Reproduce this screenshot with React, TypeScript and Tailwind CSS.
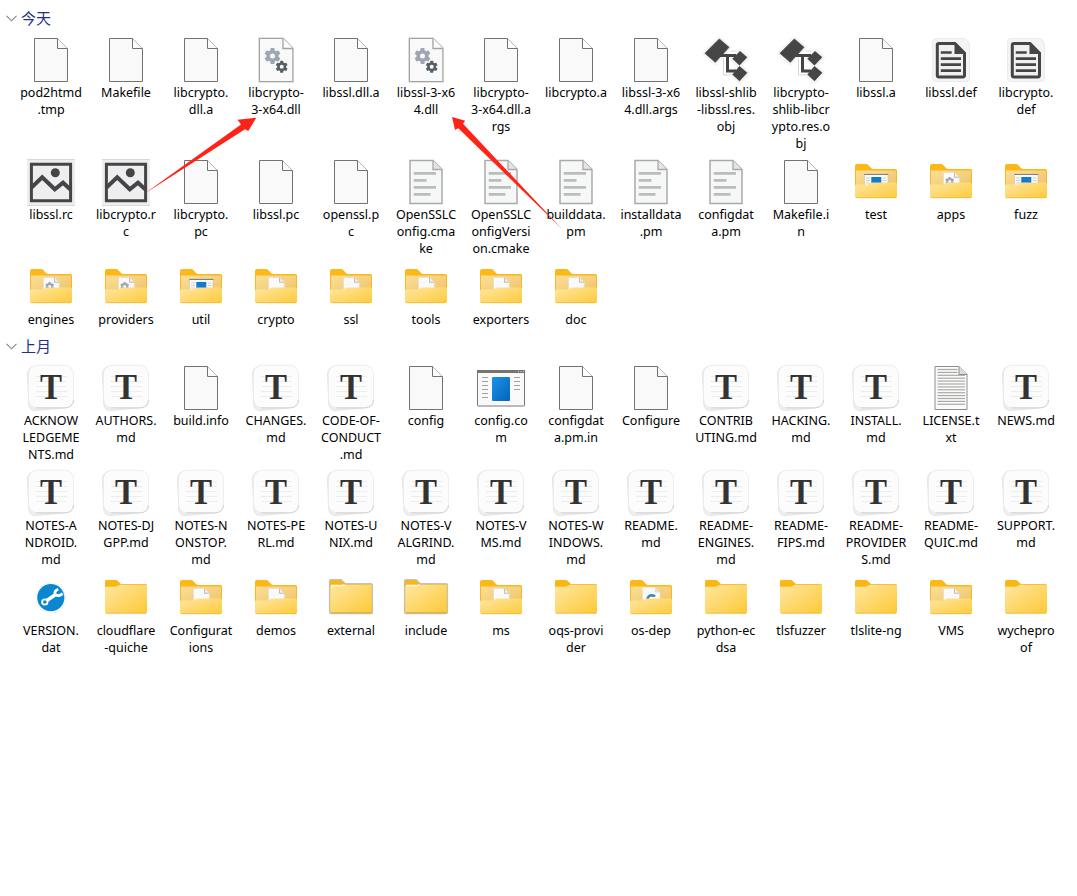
import React from "react";

type Kind =
  | "file" | "dll" | "obj" | "def" | "image" | "script" | "markdown" | "window" | "text" | "data"
  | "folder" | "folderEdge" | "folderPage" | "folderGear" | "folderWindow" | "folderC";

type Item = [Kind, ...string[]];

const today: Item[][] = [
  [
    ["file", "pod2htmd", ".tmp"], ["file", "Makefile"], ["file", "libcrypto.", "dll.a"],
    ["dll", "libcrypto-", "3-x64.dll"], ["file", "libssl.dll.a"], ["dll", "libssl-3-x6", "4.dll"],
    ["file", "libcrypto-", "3-x64.dll.a", "rgs"], ["file", "libcrypto.a"], ["file", "libssl-3-x6", "4.dll.args"],
    ["obj", "libssl-shlib", "-libssl.res.", "obj"], ["obj", "libcrypto-", "shlib-libcr", "ypto.res.o", "bj"],
    ["file", "libssl.a"], ["def", "libssl.def"], ["def", "libcrypto.", "def"],
  ],
  [
    ["image", "libssl.rc"], ["image", "libcrypto.r", "c"], ["file", "libcrypto.", "pc"], ["file", "libssl.pc"],
    ["file", "openssl.p", "c"], ["script", "OpenSSLC", "onfig.cma", "ke"], ["script", "OpenSSLC", "onfigVersi", "on.cmake"],
    ["script", "builddata.", "pm"], ["script", "installdata", ".pm"], ["script", "configdat", "a.pm"],
    ["file", "Makefile.i", "n"], ["folderWindow", "test"], ["folderGear", "apps"], ["folderWindow", "fuzz"],
  ],
  [
    ["folderGear", "engines"], ["folderGear", "providers"], ["folderWindow", "util"], ["folderPage", "crypto"],
    ["folderPage", "ssl"], ["folderPage", "tools"], ["folderPage", "exporters"], ["folderPage", "doc"],
  ],
];

const lastMonth: Item[][] = [
  [
    ["markdown", "ACKNOW", "LEDGEME", "NTS.md"], ["markdown", "AUTHORS.", "md"], ["file", "build.info"],
    ["markdown", "CHANGES.", "md"], ["markdown", "CODE-OF-", "CONDUCT", ".md"], ["file", "config"],
    ["window", "config.co", "m"], ["file", "configdat", "a.pm.in"], ["file", "Configure"],
    ["markdown", "CONTRIB", "UTING.md"], ["markdown", "HACKING.", "md"], ["markdown", "INSTALL.", "md"],
    ["text", "LICENSE.t", "xt"], ["markdown", "NEWS.md"],
  ],
  [
    ["markdown", "NOTES-A", "NDROID.", "md"], ["markdown", "NOTES-DJ", "GPP.md"], ["markdown", "NOTES-N", "ONSTOP.", "md"],
    ["markdown", "NOTES-PE", "RL.md"], ["markdown", "NOTES-U", "NIX.md"], ["markdown", "NOTES-V", "ALGRIND.", "md"],
    ["markdown", "NOTES-V", "MS.md"], ["markdown", "NOTES-W", "INDOWS.", "md"], ["markdown", "README.", "md"],
    ["markdown", "README-", "ENGINES.", "md"], ["markdown", "README-", "FIPS.md"], ["markdown", "README-", "PROVIDER", "S.md"],
    ["markdown", "README-", "QUIC.md"], ["markdown", "SUPPORT.", "md"],
  ],
  [
    ["data", "VERSION.", "dat"], ["folder", "cloudflare", "-quiche"], ["folderPage", "Configurat", "ions"],
    ["folderPage", "demos"], ["folderEdge", "external"], ["folderEdge", "include"], ["folderPage", "ms"],
    ["folder", "oqs-provi", "der"], ["folderC", "os-dep"], ["folder", "python-ec", "dsa"], ["folder", "tlsfuzzer"],
    ["folder", "tlslite-ng"], ["folderPage", "VMS"], ["folder", "wychepro", "of"],
  ],
];

function Gear({ cx, cy, r, hole, fill }: { cx: number; cy: number; r: number; hole: number; fill: string }) {
  const teeth = [0, 60, 120, 180, 240, 300];
  const mid = (r * 0.76 + hole) / 2;
  return (
    <g transform={`translate(${cx} ${cy})`}>
      {teeth.map((a) => (
        <rect key={a} x={-r * 0.26} y={-r} width={r * 0.52} height={r * 0.5} rx={r * 0.1} fill={fill} transform={`rotate(${a})`} />
      ))}
      <circle r={mid} fill="none" stroke={fill} strokeWidth={r * 0.76 - hole} />
    </g>
  );
}

function OpenFolder({ children }: { children: React.ReactNode }) {
  return (
    <>
      <path d="M3 8Q3 6 5 6H14Q15.5 6 16.5 7.2L19 10Q20 11 21.500 11H43.500Q45 11 45 12.500V30H3Z" fill="#fbb816" />
      <path d="M4 12.500H44V30H4Z" fill="url(#inner)" />
      {children}
      <path d="M3 27.500Q3 26.500 4.500 26.500H15.500L20 24.500H43.500Q45 24.500 45 26V38.500Q45 40 43.500 40H4.500Q3 40 3 38.500Z" fill="url(#front)" />
      <path d="M4 39.700H44" stroke="#eeb83a" strokeWidth="0.8" />
    </>
  );
}

function BlankPage() {
  return (
    <>
      <path d="M7.500 2.500H30.500L40.500 12.500V45.500H7.500Z" fill="#f9f9f9" stroke="#72726e" />
      <path d="M30.500 2.500V12.500H40.500" fill="#fcfcfc" stroke="#72726e" />
    </>
  );
}

function MiniPage() {
  return (
    <>
      <path d="M16.500 14.500H27.500L32.300 19.300V30H16.500Z" fill="#fafafc" stroke="#dedcd8" strokeWidth="0.6" />
      <path d="M27.500 14.800V19.300H32" fill="#eee" stroke="#aaa89f" strokeWidth="0.7" />
    </>
  );
}

function Drawing({ kind }: { kind: Kind }) {
  switch (kind) {
    case "file":
      return <BlankPage />;
    case "dll":
      return (
        <>
          <path d="M7.500 2.500H31L40.800 12.500V45.500H7.500Z" fill="none" stroke="#d9d9d7" strokeWidth="2.600" />
          <path d="M7.500 2.500H31L40.800 12.500V45.500H7.500Z" fill="#f9f9f9" stroke="#a3a3a0" />
          <path d="M31 2.500V12.500H40.800" fill="#fcfcfc" stroke="#a3a3a0" strokeWidth="1.300" />
          <Gear cx={20.500} cy={20} r={8} hole={2.500} fill="#9ea7b1" />
          <Gear cx={29.700} cy={30.800} r={6} hole={2} fill="#566066" />
        </>
      );
    case "obj":
      return (
        <>
          <g stroke="#f3f3f3" strokeWidth="5" strokeLinejoin="round" fill="#f3f3f3">
            <path d="M17.300 3L27 11.300L13.300 26.300L3 17.300Z" />
            <path d="M38 15L45.300 21.300L37.500 29.500L30.300 22.700ZM37.500 30L45.300 36.700L37.500 45.300L30.300 38.500Z" />
          </g>
          <path d="M21.500 22V39H29" fill="none" stroke="#d7d7d7" />
          <path d="M29 15H34" stroke="#ddd" />
          <g fill="#454545">
            <path d="M17.300 3L27 11.300L13.300 26.300L3 17.300Z" stroke="#454545" strokeWidth="0.800" strokeLinejoin="round" />
            <path d="M38 15L45.300 21.300L37.500 29.500L30.300 22.700ZM37.500 30L45.300 36.700L37.500 45.300L30.300 38.500Z" />
            <path d="M18 18H34V21H27V33.500H34V36.500H24V21H18Z" />
          </g>
        </>
      );
    case "def":
      return (
        <>
          <path d="M9 2.500H35Q42.500 2.500 42.500 10V42Q42.500 45.500 39 45.500H9Q5.500 45.500 5.500 42V6Q5.500 2.500 9 2.500Z" fill="#f4f4f4" stroke="#ebebeb" />
          <path d="M12 7.500H28L37.500 17V39Q37.500 41 35.500 41H12Q10.300 41 10.300 39V9Q10.300 7.500 12 7.500Z" fill="#f0f0f0" stroke="#454545" strokeWidth="3" />
          <path d="M27.500 7V18H38Z" fill="#454545" />
          <path d="M13.800 16.500H24.700M13.800 22.600H34M13.800 28.600H34M13.800 34.600H34" stroke="#454545" strokeWidth="2.600" />
        </>
      );
    case "image":
      return (
        <>
          <path d="M0 1H48V48H0Z" fill="#eeeeef" />
          <path d="M0 1.500H48M0 47.500H48" stroke="#d9d9d9" />
          <path d="M4.400 6.200H43.600V42.800H4.400Z" fill="#eeeef0" stroke="#454545" strokeWidth="3" />
          <circle cx="28.300" cy="14.700" r="4.500" fill="#454545" />
          <path d="M4 30L15.200 19.300L27.800 31.300L36 24.700L44 32" fill="none" stroke="#454545" strokeWidth="4" />
        </>
      );
    case "script":
      return (
        <>
          <path d="M8 2.500H31L40 11.500V45.500H8Z" fill="#f6f7f7" stroke="#aaaba9" strokeWidth="1.500" />
          <path d="M31 2.500V11.500H40" fill="#e4e4e4" stroke="#aaaba9" strokeWidth="1.300" />
          <path d="M11.700 15.300H34M11.700 22.300H24.500M11.700 29.300H34M11.700 36.300H28.500" stroke="#bbbdbb" strokeWidth="2.800" />
        </>
      );
    case "markdown":
      return (
        <>
          <path d="M8 2Q.8 3 .5 10L1.700 40Q2.300 46.800 9 46.500L36 44Z" fill="#efefef" stroke="#dfdfdf" strokeWidth="0.8" />
          <rect x="1.500" y="1.300" width="45" height="42.500" rx="8.500" fill="#fcfcfc" stroke="#eaeaea" strokeWidth="0.800" />
          <path d="M9 43.900H38Q46.400 43.500 46.500 36" fill="none" stroke="#d2d2d2" />
          <path d="M9 12.500H40M9 17.500H40M9 22.500H40M9 27.500H40M9 32.500H40" stroke="#ededed" strokeWidth="1.200" />
          <text x="24" y="34.500" textAnchor="middle" fontSize="36" fontWeight="700" fontFamily="Liberation Serif, serif" fill="#333" textLength="22" lengthAdjust="spacingAndGlyphs">T</text>
        </>
      );
    case "window":
      return (
        <>
          <rect x="0.500" y="6.500" width="47" height="35.500" rx="0.800" fill="#f9f9f9" stroke="#777774" />
          <path d="M0 6H48V9H0Z" fill="#747471" />
          <path d="M41 7.500H42M43.500 7.500H44.500M46 7.500H47" stroke="#ddd" />
          <rect x="15" y="13" width="18" height="24" rx="1" fill="url(#blue)" />
          <path d="M5 13.500H11M5 17.500H11M5 21.500H11M5 25.500H11M5 29.500H11M5 33.500H11M37 13.500H43M37 17.500H43M37 21.500H43M37 25.500H43" stroke="#a0a09e" />
        </>
      );
    case "text":
      return (
        <>
          <path d="M8 2.500H32L40 10.500V45.500H8Z" fill="#fafafa" stroke="#8e8e8b" />
          {[5.500, 8.400, 11.300, 14.200, 17.100, 20, 22.900, 25.800, 28.700, 31.600, 34.500, 37.400, 40.300].map((y) => (
            <path key={y} d={`M10.500 ${y}H${y < 11 ? 30.500 : 38}`} stroke="#aaaaa8" strokeWidth="1.200" />
          ))}
          <path d="M32 2.500V10.500H40" fill="#ddd" stroke="#8e8e8b" />
        </>
      );
    case "data":
      return (
        <>
          <circle cx="24" cy="24" r="15" fill="#fff" stroke="#e4e4e4" strokeWidth="0.800" strokeDasharray="2 1.500" />
          <circle cx="23.800" cy="23.700" r="13.600" fill="#0b87cf" />
          <path d="M19.500 26.800L29 20.300" stroke="#fff" strokeWidth="3.600" />
          <circle cx="17.800" cy="28" r="2.700" fill="#0b87cf" stroke="#fff" strokeWidth="1.800" />
          <path d="M31.300 15.300Q26.500 17 28.500 20.700Q32 23 35.500 19.500" fill="none" stroke="#fff" strokeWidth="2.800" />
        </>
      );
    case "folder":
      return (
        <>
          <path d="M3 7.500Q3 6 4.500 6H13.500Q15 6 16 7.200L19 10H43.500Q45 10 45 11.500V20H3Z" fill="#f9b716" />
          <path d="M3 12.800H13Q14.500 12.800 15.500 12L18 10.700H45V38Q45 39.500 43.500 39.500H4.500Q3 39.500 3 38Z" fill="url(#closed)" />
          <path d="M4 39.200H44" stroke="#eab63d" strokeWidth="0.800" />
        </>
      );
    case "folderEdge":
      return (
        <>
          <path d="M2.500 7Q2.500 5.700 4 5.700H14L18.500 9.700H44Q45.500 9.700 45.500 11V38Q45.500 39.600 44 39.600H4Q2.500 39.600 2.500 38Z" fill="#f9b716" stroke="#c2c1bf" strokeWidth="1.200" />
          <path d="M3.300 12H14L17 10.800H44.800V38.800H3.300Z" fill="url(#closed)" />
          <path d="M4 11.600H15.500L17.500 10.700" fill="none" stroke="#fff8e6" strokeWidth="1.500" />
          <path d="M4 38.800H44.500" stroke="#d9a326" strokeWidth="0.800" />
        </>
      );
    case "folderPage":
      return <OpenFolder><MiniPage /></OpenFolder>;
    case "folderGear":
      return (
        <OpenFolder>
          <MiniPage />
          <Gear cx={22.700} cy={23.500} r={4.500} hole={1.500} fill="#9ea7b1" />
        </OpenFolder>
      );
    case "folderWindow":
      return (
        <OpenFolder>
          <path d="M12.500 16H36V30H12.500Z" fill="#fafafa" stroke="#c8c2b6" strokeWidth="0.600" />
          <path d="M12.300 16.500H36.300" stroke="#83827f" />
          <path d="M14 20H18M14 22.500H18M14 25H18M31 20H34.500M31 22.500H34.500" stroke="#cfcfcf" />
          <path d="M19.300 19H29.300V30H19.300Z" fill="#117bd0" />
        </OpenFolder>
      );
    case "folderC":
      return (
        <OpenFolder>
          <path d="M15.700 13.500H28L33 18.500V30H15.700Z" fill="#f8f9fa" />
          <path d="M28 13.500V18.500H33Z" fill="#dedede" />
          <path d="M20 27Q20.500 21.500 24.500 21.200Q27 21.200 28 22.500" fill="none" stroke="#3e86a2" strokeWidth="2.500" />
        </OpenFolder>
      );
  }
}

function Entry({ item }: { item: Item }) {
  const [kind, ...lines] = item;
  return (
    <div className="w-[75px]">
      <svg className="ml-[13px] block h-12 w-12 overflow-visible" viewBox="0 0 48 48">
        <Drawing kind={kind} />
      </svg>
      <div className="flex flex-col items-center pr-px text-[12.5px] leading-[17px] whitespace-nowrap text-black">
        {lines.map((line, i) => <span key={i}>{line}</span>)}
      </div>
    </div>
  );
}

function Section({ title, rows }: { title: string; rows: Item[][] }) {
  return (
    <section>
      <h2 className="flex h-[30px] items-start pl-[6px] text-[15px] leading-6 font-normal text-[#1e3287]">
        <svg className="mt-[9px] mr-[4px] h-[7px] w-[11px]" viewBox="0 0 11 7" fill="none" stroke="#858585" strokeWidth="1.100">
          <path d="M0.500 0.800L5.500 5.800L10.500 0.800" />
        </svg>
        {title}
      </h2>
      {rows.map((row, i) => (
        <div key={i} className="flex pb-[6px] pl-[14px]">
          {row.map((item, j) => <Entry key={j} item={item} />)}
        </div>
      ))}
    </section>
  );
}

export default function App() {
  return (
    <main className="relative h-[896px] w-[1077px] overflow-hidden bg-white pt-[6px] font-['Noto_Sans','Noto_Sans_CJK_SC',sans-serif]">
      <svg className="absolute h-0 w-0" aria-hidden="true">
        <defs>
          <linearGradient id="front" x1="0" y1="0" x2="1" y2="1">
            <stop offset="0" stopColor="#ffe7a0" />
            <stop offset="1" stopColor="#fdca3c" />
          </linearGradient>
          <linearGradient id="closed" x1="0" y1="0" x2="1" y2="1">
            <stop offset="0" stopColor="#ffe7a0" />
            <stop offset="1" stopColor="#fdc938" />
          </linearGradient>
          <linearGradient id="inner" x1="0" y1="0" x2="1" y2="1">
            <stop offset="0" stopColor="#fbdf96" />
            <stop offset="1" stopColor="#efc36b" />
          </linearGradient>
          <linearGradient id="blue" x1="0" y1="0" x2="1" y2="1">
            <stop offset="0" stopColor="#1c93e8" />
            <stop offset="1" stopColor="#0562ba" />
          </linearGradient>
        </defs>
      </svg>
      <Section title="今天" rows={today} />
      <Section title="上月" rows={lastMonth} />
      <svg className="pointer-events-none absolute top-0 left-0 h-[240px] w-[600px]" viewBox="0 0 600 240" fill="#ff2317">
        <path d="M144 194L241 124.500L237.500 119.700L256.300 117.800L248.300 131L245 129.300Z" />
        <path d="M562 229L458.300 128.300L455 130L452 117L465.200 120.700L463 123.800Z" />
      </svg>
    </main>
  );
}
